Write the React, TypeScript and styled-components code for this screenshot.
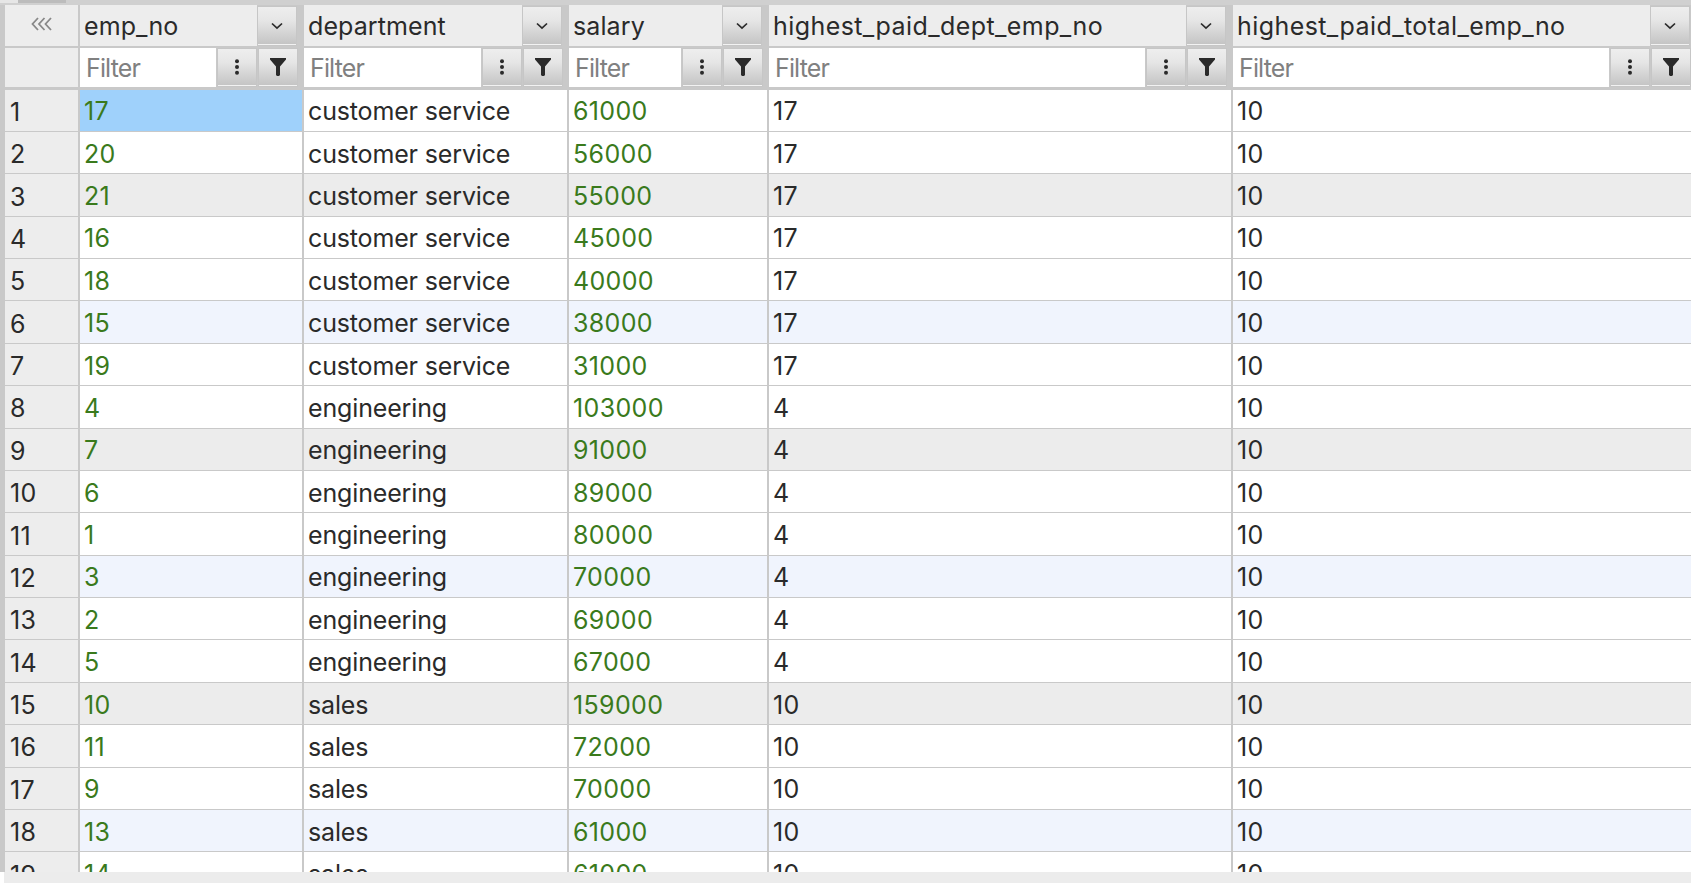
import styled, { createGlobalStyle } from "styled-components";

const GlobalStyle = createGlobalStyle`
  html, body, #root {
    height: 100%;
    margin: 0;
  }
  body {
    background: #fff;
    color: #2a2a2a;
    font-family: Inter, "Liberation Sans", sans-serif;
    overflow: hidden;
  }
`;

const COLUMNS = "75px 224px 265px 200px 464px 458px";

const Page = styled.div`
  display: flex;
  flex-direction: column;
  height: 883px;
  width: 1691px;
`;

const TopStrip = styled.div`
  background: #d0d0d0;
  display: flex;
  flex: none;
  height: 4.6px;
`;

const StripTab = styled.div<{ $width: number; $color: string }>`
  background: ${(p) => p.$color};
  height: 3px;
  width: ${(p) => p.$width}px;
`;

const Main = styled.div`
  background: #c9c9c9;
  flex: 1;
  min-height: 0;
  overflow: hidden;
  padding-left: 5px;
`;

const Footer = styled.div`
  background: #ececec;
  flex: none;
  height: 11px;
  margin-left: 4px;
`;

const HeaderRow = styled.div`
  display: grid;
  grid-template-columns: ${COLUMNS};
  height: 43px;
`;

const FilterRow = styled.div`
  display: grid;
  grid-template-columns: ${COLUMNS};
  height: 42px;
`;

const CornerCell = styled.div`
  align-items: center;
  background: #ededed;
  border-bottom: 2px solid #c9c9c9;
  border-right: 2px solid #c9c9c9;
  box-sizing: border-box;
  color: #888;
  display: flex;
  justify-content: center;
  padding-bottom: 3px;
`;

const BlankCell = styled(CornerCell)`
  border-bottom-width: 3px;
`;

const HeaderCell = styled.div`
  display: flex;
  padding-right: 7px;

  &:last-child {
    padding-right: 1px;
  }
`;

const ColumnName = styled.div<{ $wide?: boolean }>`
  align-items: center;
  background: #ededed;
  box-sizing: border-box;
  display: flex;
  flex: 1;
  font-size: 25px;
  height: 41.5px;
  letter-spacing: ${(p) => (p.$wide ? "0.42px" : "0.1px")};
  min-width: 0;
  padding: 2px 0 0 4px;
`;

const Button = styled.div`
  align-items: center;
  background: linear-gradient(#eeeeee 0%, #e6e6e6 35%, #c3c3c3 100%);
  border: 1px solid #c6c6c6;
  box-shadow: inset 0 -1px 0 #f2f2f2;
  box-sizing: border-box;
  color: #2a2a2a;
  display: flex;
  flex: none;
  justify-content: center;
  width: 40px;
`;

const ChevronButton = styled(Button)`
  height: 40px;
  margin-top: 1.4px;
`;

const FilterCell = styled.div`
  display: flex;
  gap: 1px;
  padding-right: 6px;

  &:last-child {
    padding-right: 0;
  }
`;

const FilterInput = styled.input`
  background: #fff;
  border: 0;
  border-radius: 0;
  box-sizing: border-box;
  color: #2a2a2a;
  flex: 1;
  font-family: inherit;
  font-size: 25px;
  height: 39px;
  letter-spacing: -0.85px;
  min-width: 0;
  outline: none;
  padding: 2px 0 0 6px;

  &::placeholder {
    color: #808080;
    opacity: 1;
  }
`;

const FilterButton = styled(Button)`
  height: 39px;
`;

const DataRow = styled.div<{ $stripe: string }>`
  background: ${(p) =>
    p.$stripe === "gray" ? "#ececec" : p.$stripe === "blue" ? "#f0f4fd" : "#fff"};
  display: grid;
  grid-template-columns: ${COLUMNS};
  height: 42.39px;
`;

const RowNumber = styled.div`
  align-items: center;
  background: #ededed;
  border-bottom: 1.7px solid #c9c9c9;
  border-right: 2px solid #c9c9c9;
  box-sizing: border-box;
  display: flex;
  font-size: 25px;
  letter-spacing: 0.4px;
  padding: 3px 0 0 5px;
`;

const Cell = styled.div<{ $numeric?: boolean; $green?: boolean; $selected?: boolean }>`
  align-items: center;
  background: ${(p) => (p.$selected ? "#9fd1fb" : "transparent")};
  border-bottom: 1.7px solid #c9c9c9;
  border-right: 2px solid #c9c9c9;
  box-sizing: border-box;
  color: ${(p) => (p.$green ? "#3a7a1c" : "#2a2a2a")};
  display: flex;
  font-size: 25px;
  letter-spacing: ${(p) => (p.$numeric ? "0.35px" : "-0.15px")};
  padding: 2px 0 0 4px;
  white-space: nowrap;

  &:last-child {
    border-right: 0;
  }
`;

const columnNames = [
  "emp_no",
  "department",
  "salary",
  "highest_paid_dept_emp_no",
  "highest_paid_total_emp_no",
];

const rows = [
  [17, "customer service", 61000, 17, 10],
  [20, "customer service", 56000, 17, 10],
  [21, "customer service", 55000, 17, 10],
  [16, "customer service", 45000, 17, 10],
  [18, "customer service", 40000, 17, 10],
  [15, "customer service", 38000, 17, 10],
  [19, "customer service", 31000, 17, 10],
  [4, "engineering", 103000, 4, 10],
  [7, "engineering", 91000, 4, 10],
  [6, "engineering", 89000, 4, 10],
  [1, "engineering", 80000, 4, 10],
  [3, "engineering", 70000, 4, 10],
  [2, "engineering", 69000, 4, 10],
  [5, "engineering", 67000, 4, 10],
  [10, "sales", 159000, 10, 10],
  [11, "sales", 72000, 10, 10],
  [9, "sales", 70000, 10, 10],
  [13, "sales", 61000, 10, 10],
  [14, "sales", 61000, 10, 10],
];

function stripeFor(index: number) {
  if (index % 6 === 2) return "gray";
  if (index % 6 === 5) return "blue";
  return "white";
}

function CollapseIcon() {
  return (
    <svg width="22" height="14" viewBox="0 0 22 14" fill="none" stroke="currentColor" strokeWidth="1.8">
      <path d="M7 1 1.5 7 7 13" />
      <path d="M13.5 1 8 7l5.5 6" />
      <path d="M20 1 14.5 7l5.5 6" />
    </svg>
  );
}

function ChevronIcon() {
  return (
    <svg width="12" height="8" viewBox="0 0 12 8" fill="none" stroke="currentColor" strokeWidth="1.7">
      <path d="M1 1.5 6 6.2l5-4.7" />
    </svg>
  );
}

function KebabIcon() {
  return (
    <svg width="6" height="16" viewBox="0 0 6 16" fill="currentColor">
      <circle cx="3" cy="2.2" r="2" />
      <circle cx="3" cy="8" r="2" />
      <circle cx="3" cy="13.8" r="2" />
    </svg>
  );
}

function FunnelIcon() {
  return (
    <svg width="16" height="18" viewBox="0 0 16 18" fill="currentColor">
      <path d="M0 0h16v1.5L10 8.5V17l-1 1H7L6 17V8.5L0 1.5z" />
    </svg>
  );
}

export default function App() {
  return (
    <Page>
      <GlobalStyle />
      <TopStrip>
        <StripTab $width={18} $color="#e6e6e6" />
        <StripTab $width={48} $color="#bcbcbc" />
      </TopStrip>
      <Main>
        <HeaderRow>
          <CornerCell>
            <CollapseIcon />
          </CornerCell>
          {columnNames.map((name) => (
            <HeaderCell key={name}>
              <ColumnName $wide={name.length > 20}>{name}</ColumnName>
              <ChevronButton>
                <ChevronIcon />
              </ChevronButton>
            </HeaderCell>
          ))}
        </HeaderRow>
        <FilterRow>
          <BlankCell />
          {columnNames.map((name) => (
            <FilterCell key={name}>
              <FilterInput placeholder="Filter" />
              <FilterButton>
                <KebabIcon />
              </FilterButton>
              <FilterButton>
                <FunnelIcon />
              </FilterButton>
            </FilterCell>
          ))}
        </FilterRow>
        {rows.map((row, i) => (
          <DataRow key={i} $stripe={stripeFor(i)}>
            <RowNumber>{i + 1}</RowNumber>
            {row.map((value, c) => (
              <Cell
                key={c}
                $numeric={typeof value === "number"}
                $green={c === 0 || c === 2}
                $selected={i === 0 && c === 0}
              >
                {value}
              </Cell>
            ))}
          </DataRow>
        ))}
      </Main>
      <Footer />
    </Page>
  );
}
